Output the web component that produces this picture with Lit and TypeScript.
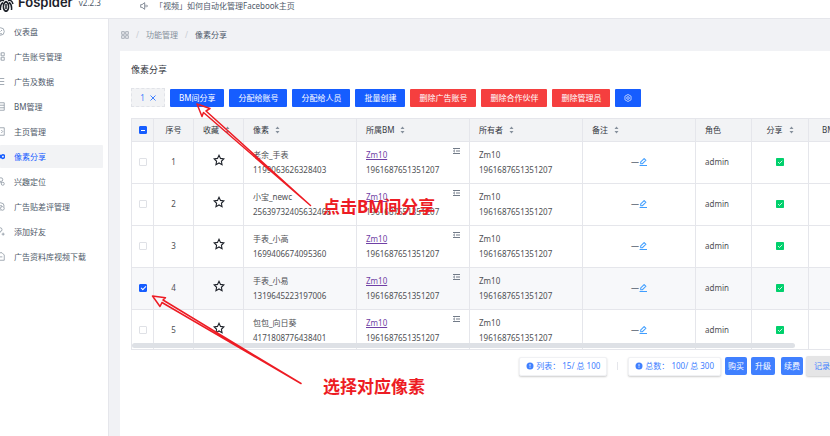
import { LitElement, html, css, svg, nothing } from "lit";
import { customElement, state } from "lit/decorators.js";
import { classMap } from "lit/directives/class-map.js";

interface Pixel { id: number; name: string; code: string; }

const BM_ID = "1961687651351207";

const PIXELS: Pixel[] = [
  { id: 1, name: "老余_手表", code: "1199063626328403" },
  { id: 2, name: "小宝_newc", code: "25639732405632468" },
  { id: 3, name: "手表_小高", code: "1699406674095360" },
  { id: 4, name: "手表_小易", code: "1319645223197006" },
  { id: 5, name: "包包_向日葵", code: "4171808776438401" },
];

const MENU = [
  { label: "仪表盘", icon: svg`<circle cx="6" cy="6" r="5"/><path d="M6 6l2-2M4 9h4"/>` },
  { label: "广告账号管理", icon: svg`<path d="M1 1h4v4H1zM7 1h4v4H7zM1 7h4v4H1zM7 7h4v4H7z"/>` },
  { label: "广告及数据", icon: svg`<path d="M1 2h10M1 6h10M1 10h10"/>` },
  { label: "BM管理", icon: svg`<path d="M1 1h10v10H1zM1 4.300h10M1 7.700h10"/>` },
  { label: "主页管理", icon: svg`<path d="M1 1h10v10H1zM7 4l2 2-2 2"/>` },
  { label: "像素分享", icon: svg`<path d="M4 3.500a2.500 2.500 0 1 0 0 5c2 0 3-5 5-5a2.500 2.500 0 1 1 0 5c-2 0-3-5-5-5z" stroke-width="2"/>` },
  { label: "兴趣定位", icon: svg`<circle cx="6.500" cy="3.500" r="2.500"/><path d="M1 11c0-4 5-5 7-3"/><circle cx="9" cy="9" r="2"/>` },
  { label: "广告贴差评管理", icon: svg`<path d="M11 6A5 5 0 1 0 6 11"/><circle cx="8.500" cy="8.500" r="2.500"/><path d="M4 5h4"/>` },
  { label: "添加好友", icon: svg`<circle cx="5.500" cy="3.500" r="2.500"/><path d="M1 11c0-3 2-4 5-4M9.500 7.500v4M7.500 9.500h4"/>` },
  { label: "广告资料库视频下载", icon: svg`<path d="M1 1h7l3 3v7H1zM5 6.500h3.500"/>` },
];

const COLUMNS = [
  { label: "序号", cls: "mid", sort: false },
  { label: "收藏", cls: "", sort: true },
  { label: "像素", cls: "", sort: true },
  { label: "所属BM", cls: "", sort: true },
  { label: "所有者", cls: "", sort: true },
  { label: "备注", cls: "", sort: true },
  { label: "角色", cls: "", sort: false },
  { label: "分享", cls: "mid", sort: true },
  { label: "BM", cls: "wide", sort: false },
];

@customElement("app-root")
export class AppRoot extends LitElement {
  @state() private selected = new Set<number>([4]);

  static styles = css`
    :host {
      display: block;
      position: relative;
      min-height: 100vh;
      overflow: hidden;
      background: #f1f2f5;
      color: #4e5969;
      font: 8px/12px "Noto Sans", "Noto Sans CJK SC", sans-serif;
    }
    * { box-sizing: border-box; }
    button { font: inherit; border: 0; margin: 0; cursor: pointer; white-space: nowrap; }
    a { color: inherit; text-decoration: none; }
    svg { display: block; flex: none; fill: none; stroke: currentColor; }

    .top {
      display: flex;
      align-items: flex-end;
      height: 19px;
      padding-bottom: 6px;
      border-bottom: 1px solid #e5e6eb;
      background: #fff;
      white-space: nowrap;
    }
    .brand { display: flex; align-items: flex-end; width: 140px; color: #1d2129; }
    .brand svg { width: 14px; height: 18px; }
    .word { margin: 0 6px 3px 4px; font: 600 13px/14px Inter, sans-serif; }
    .version { margin-bottom: 3px; color: #4e5969; }
    .news { display: flex; align-items: center; gap: 7px; }
    .news svg { width: 8px; height: 8px; }

    .body { display: flex; min-height: calc(100vh - 19px); }
    .side {
      flex: none;
      width: 109px;
      padding: 1px 5px 0 0;
      border-right: 1px solid #e5e6eb;
      background: #fff;
    }
    .side ul { list-style: none; margin: 0; padding: 0; display: grid; gap: 2px; }
    .item { display: flex; align-items: center; gap: 9px; height: 23px; border-radius: 1px; }
    .item svg { width: 9px; height: 9px; margin-left: -4px; color: #86909c; }
    .item.on { background: #f2f3f5; color: #165dff; }
    .item.on svg { color: #165dff; }

    .main { flex: 1; min-width: 0; display: flex; flex-direction: column; }
    .crumbs { display: flex; align-items: center; gap: 7px; height: 32px; padding-left: 12px; color: #86909c; }
    .crumbs svg { width: 8px; height: 8px; }
    .slash { color: #c9cdd4; }
    .here { color: #4e5969; }
    .card { flex: 1; margin-left: 11px; padding: 12px 0 0 11px; background: #fff; }
    h1 { margin: 0 0 11px; font-size: 9px; line-height: 14px; font-weight: 400; color: #34383f; }

    .tools { display: flex; align-items: center; gap: 5px; }
    .tag {
      display: flex; align-items: center; justify-content: center; gap: 5px;
      width: 34px; height: 19px;
      border: 1px dashed #e1e3e8;
      background: #f2f3f5; color: #4080ff;
    }
    .tag button { display: flex; padding: 0; background: none; color: inherit; }
    .tag svg { width: 6px; height: 6px; }
    .tool { height: 18px; padding: 0 9px; border-radius: 1px; background: #165dff; color: #fff; }
    .tool.bad { background: #f53f3f; }
    .tool.gear svg { width: 8px; height: 8px; }

    .grid {
      position: relative;
      height: 232px;
      margin-top: 11px;
      overflow: hidden;
      border: solid #e5e6eb;
      border-width: 1px 0 1px 1px;
    }
    table { width: 100%; min-width: 790px; table-layout: fixed; border-collapse: separate; border-spacing: 0; color: #4e4f53; }
    th, td { padding: 0 9px; border: solid #e5e6eb; border-width: 0 1px 1px 0; text-align: left; font-weight: 400; }
    th { height: 23px; background: #f2f3f5; color: #34383f; white-space: nowrap; }
    td { height: 42px; padding-bottom: 2px; line-height: 15px; }
    tr.on td { background: #f7f8fa; }
    .c-check { width: 22px; }
    .c-no { width: 40px; }
    .c-fav { width: 50px; }
    .c-text { width: 113px; }
    .c-role { width: 56px; }
    .c-share { width: 57px; }
    .mid, .box { text-align: center; }
    .box { padding-left: 0; padding-right: 0; }
    .wide { padding-left: 13px; }
    .label { display: inline-flex; align-items: center; gap: 6px; }
    .label svg { width: 5px; height: 8px; fill: #86909c; stroke: none; }
    .star { display: block; margin: 0 auto; padding: 0 0 3px; background: none; color: #1d2129; }
    .star svg { width: 12px; height: 12px; }
    .bm { position: relative; }
    .bm a { color: #6f3fa5; text-decoration: underline; }
    .more { position: absolute; top: 6px; right: 9px; padding: 0; background: none; color: #4e5969; }
    .more svg { width: 7px; height: 6px; }
    .note { display: flex; align-items: center; justify-content: center; color: #4e5969; }
    .note button { padding: 0; background: none; color: #409eff; }
    .note svg { width: 8px; height: 8px; }
    .yes svg { width: 8px; height: 8px; margin: 0 auto; stroke: none; }

    input[type="checkbox"] {
      appearance: none;
      display: block;
      width: 8px; height: 8px;
      margin: 0 auto;
      border: 1px solid #dfe1e6;
      border-radius: 1px;
      background: #fff;
    }
    input[type="checkbox"]:checked, input[type="checkbox"]:indeterminate { border-color: #165dff; background: #165dff; }
    input[type="checkbox"]:checked::after {
      content: "";
      display: block;
      width: 4px; height: 2px;
      margin: 1px;
      border: solid #fff;
      border-width: 0 0 1px 1px;
      transform: rotate(-45deg);
    }
    input[type="checkbox"]:indeterminate::after { content: ""; display: block; width: 4px; height: 1px; margin: 3px 1px; background: #fff; }

    .thumb { position: absolute; left: 0; bottom: 1px; width: 95%; height: 5px; border-radius: 3px; background: #dee1e6; }

    .foot { display: flex; align-items: center; justify-content: flex-end; margin: 6px -16px 0 0; color: #4080ff; white-space: nowrap; }
    .stat { display: flex; align-items: center; gap: 2px; height: 19px; padding: 0 6px; border: 1px solid #f0f1f4; border-radius: 2px; background: #fff; box-shadow: 0 1px 2px #0003; }
    .stat svg { width: 8px; height: 8px; fill: #4080ff; stroke: none; }
    .bar { width: 1px; height: 8px; margin: 0 10px; background: #e5e6eb; }
    .buy { height: 18px; padding: 0 3px; border-radius: 2px; background: #4080ff; color: #fff; margin-left: 4px; }
    .buy.up { padding: 0 4px; }
    .buy.gap { margin-left: 6px; }
    .log { width: 40px; height: 20px; margin-left: 3px; padding: 0 8px; border-radius: 2px; background: #e5e5e6; color: #4080ff; text-align: left; box-shadow: 0 1px 2px #0003; }

    .marks { position: absolute; top: 0; left: 0; width: 830px; height: 436px; pointer-events: none; stroke: #ed1c24; stroke-width: 1.500; stroke-linejoin: round; }
    .callout { position: absolute; left: 323px; margin: 0; color: #ed1c24; font: 700 17px/22px "Noto Sans", "Noto Sans CJK SC", sans-serif; white-space: nowrap; pointer-events: none; }
    .share-tip { top: 196px; }
    .pick-tip { top: 376px; }
  `;

  private toggle(id: number) {
    const next = new Set(this.selected);
    next.has(id) ? next.delete(id) : next.add(id);
    this.selected = next;
  }

  private toggleAll() {
    this.selected = this.selected.size === PIXELS.length ? new Set() : new Set(PIXELS.map((p) => p.id));
  }

  private renderTop() {
    return html`<header class="top">
      <div class="brand">
        <svg viewBox="0 0 14 18" stroke-width="1.500">
          <path d="M6 7.500c-3.500 2-3.500 8.500 0 10 3.500-1.500 3.500-8 0-10zM3 8.500C.5 10 0 12 .5 16M9 8.500c2.500 1.500 3 3.500 2.500 7.500M4 7C2 5.500 0 6.500-1 9M8 7c2-1.500 4-.5 5 3M4.500 5C3 3 1 3-1 5M7.500 5C9 3 11 3 13 5M6 10v5"/>
        </svg>
        <span class="word">Fospider</span>
        <span class="version">v2.2.3</span>
      </div>
      <div class="news">
        <svg viewBox="0 0 12 12"><path d="M1 4h2l4-3v10L3 8H1zM9 4v4M11 5v2"/></svg>
        <span>「视频」如何自动化管理Facebook主页</span>
      </div>
    </header>`;
  }

  private renderRow(p: Pixel) {
    const on = this.selected.has(p.id);
    return html`<tr class=${classMap({ on })}>
      <td class="box"><input type="checkbox" aria-label=${`选择 ${p.name}`} .checked=${on} @change=${() => this.toggle(p.id)} /></td>
      <td class="mid">${p.id}</td>
      <td><button class="star" aria-label="收藏"><svg viewBox="0 0 24 24" stroke-width="2.200"><path d="M12 2.500l3 6.300 6.900.9-5.100 4.800 1.300 6.900L12 18l-6.100 3.400 1.300-6.900L2.100 9.700 9 8.800z"/></svg></button></td>
      <td>${p.name}<br />${p.code}</td>
      <td class="bm"><a href="#bm">Zm10</a><br />${BM_ID}
        <button class="more" aria-label="详情"><svg viewBox="0 0 14 12" stroke-width="1.600"><path d="M0 1h14M6 6h8M0 11h14M4 3.500L1 6l3 2.500"/></svg></button>
      </td>
      <td>Zm10<br />${BM_ID}</td>
      <td><div class="note">—<button aria-label="编辑备注"><svg viewBox="0 0 14 14" stroke-width="1.800"><path d="M3 10V7l6-6 3 3-6 6zM1 13h13"/></svg></button></div></td>
      <td>admin</td>
      <td class="yes"><svg viewBox="0 0 16 16"><rect width="16" height="16" rx="1.500" fill="#00d06c"/><path d="M4 8l3 3 5.500-5.500" stroke="#fff" stroke-width="1.600"/></svg></td>
      <td></td>
    </tr>`;
  }

  render() {
    const all = this.selected.size === PIXELS.length;
    const some = this.selected.size > 0 && !all;
    return html`
      ${this.renderTop()}
      <div class="body">
        <nav class="side"><ul>
          ${MENU.map((m) => html`<li><a href="#menu" class=${classMap({ item: true, on: m.label === "像素分享" })}>
            <svg viewBox="0 0 12 12">${m.icon}</svg>${m.label}</a></li>`)}
        </ul></nav>
        <main class="main">
          <nav class="crumbs">
            <svg viewBox="0 0 12 12"><path d="M1 1h4v4H1zM7 1h4v4H7zM1 7h4v4H1zM7 7h4v4H7z"/></svg>
            <span class="slash">/</span><a href="#tools">功能管理</a>
            <span class="slash">/</span><span class="here">像素分享</span>
          </nav>
          <section class="card">
            <h1>像素分享</h1>
            <div class="tools">
              <span class="tag">${this.selected.size}<button aria-label="清除选择" @click=${() => (this.selected = new Set())}>
                <svg viewBox="0 0 6 6"><path d="M.5.5l5 5M5.500.5l-5 5"/></svg></button></span>
              ${["BM间分享", "分配给账号", "分配给人员", "批量创建"].map((t) => html`<button class="tool">${t}</button>`)}
              ${["删除广告账号", "删除合作伙伴", "删除管理员"].map((t) => html`<button class="tool bad">${t}</button>`)}
              <button class="tool gear" aria-label="设置"><svg viewBox="0 0 12 12"><path d="M6 .7l4.600 2.600v5.400L6 11.300 1.400 8.700V3.300z"/><circle cx="6" cy="6" r="2"/></svg></button>
            </div>
            <div class="grid">
              <table>
                <colgroup>
                  <col class="c-check" /><col class="c-no" /><col class="c-fav" />
                  <col class="c-text" /><col class="c-text" /><col class="c-text" /><col class="c-text" />
                  <col class="c-role" /><col class="c-share" /><col />
                </colgroup>
                <thead><tr>
                  <th class="box"><input type="checkbox" aria-label="全选" .checked=${all} .indeterminate=${some} @change=${this.toggleAll} /></th>
                  ${COLUMNS.map((c) => html`<th class=${c.cls}><span class="label">${c.label}${c.sort
                    ? html`<svg viewBox="0 0 10 16"><path d="M5 1l4 5H1zM5 15l4-5H1z"/></svg>` : nothing}</span></th>`)}
                </tr></thead>
                <tbody>${PIXELS.map((p) => this.renderRow(p))}</tbody>
              </table>
              <div class="thumb"></div>
            </div>
            <footer class="foot">
              <span class="stat">${this.infoIcon()}<span>列表： 15/ 总 100</span></span>
              <span class="bar"></span>
              <span class="stat">${this.infoIcon()}<span>总数： 100/ 总 300</span></span>
              <button class="buy">购买</button>
              <button class="buy up">升级</button>
              <button class="buy gap">续费</button>
              <button class="log">记录</button>
            </footer>
          </section>
        </main>
      </div>
      <svg class="marks" viewBox="0 0 830 436" aria-hidden="true">
        <path d="M197 104l13 4.500-4 2.500L310.500 205.500 203.500 112.500 202 116.500z"/>
        <path d="M152.500 296l13 1.700-2.500 2.300L301 383.500 162 302.500 160 306.500z"/>
      </svg>
      <p class="callout share-tip">点击BM间分享</p>
      <p class="callout pick-tip">选择对应像素</p>
    `;
  }

  private infoIcon() {
    return html`<svg viewBox="0 0 16 16"><circle cx="8" cy="8" r="7"/><path d="M8 4v5M8 10.500v1.500" stroke="#fff" stroke-width="1.600"/></svg>`;
  }
}
